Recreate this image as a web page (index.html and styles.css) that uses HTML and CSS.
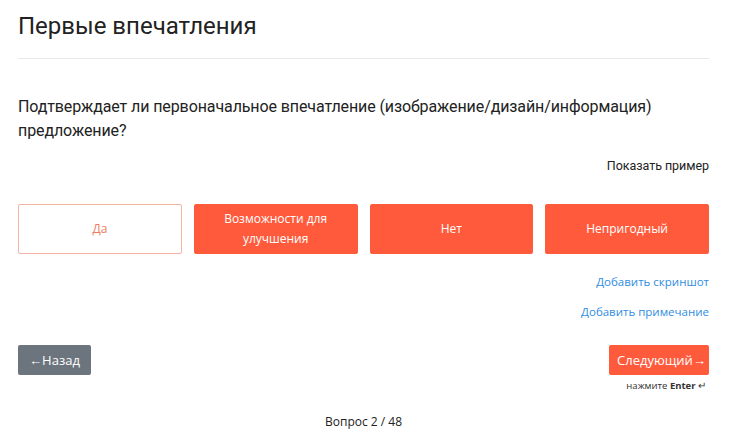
FILE: index.html
```html
<!DOCTYPE html>
<html lang="ru">
<head>
  <meta charset="UTF-8">
  <meta name="viewport" content="width=device-width, initial-scale=1.0">
  <title>Первые впечатления</title>
  <link rel="stylesheet" href="styles.css">
</head>
<body>
  <div class="container">
    <h1 class="title">Первые впечатления</h1>
    <p class="question">Подтверждает ли первоначальное впечатление (изображение/дизайн/информация) предложение?</p>
    <div class="example"><a href="#">Показать пример</a></div>

    <div class="answers">
      <button class="answer selected">Да</button>
      <button class="answer">Возможности для улучшения</button>
      <button class="answer">Нет</button>
      <button class="answer">Непригодный</button>
    </div>

    <div class="extra">
      <a href="#">Добавить скриншот</a>
      <a href="#">Добавить примечание</a>
    </div>

    <div class="nav">
      <button class="btn back">&larr;Назад</button>
      <div class="next-wrap">
        <button class="btn next">Следующий&rarr;</button>
        <div class="hint">нажмите <b>Enter</b> &#8629;</div>
      </div>
    </div>

    <div class="counter">Вопрос 2 / 48</div>
  </div>
</body>
</html>
```

FILE: styles.css
```css
body { margin: 0; background: #fff; color: #222; font-family: Roboto, "Liberation Sans", sans-serif; }
.container { padding: 0 21px 0 18px; }
.title { font-size: 24px; font-weight: 400; margin: 0; padding: 11px 0 17px; border-bottom: 1px solid #e9e9e9; line-height: 30px; }
.question { font-size: 16px; letter-spacing: -0.1px; line-height: 24px; margin: 36px 0 0; }
.example { text-align: right; margin-top: 15px; font-size: 12.5px; letter-spacing: -0.05px; }
.example a { color: #222; text-decoration: none; }

.answers { display: grid; grid-template-columns: repeat(4, 1fr); gap: 12px; margin-top: 31px; }
.answer { height: 50px; background: #ff5a3c; color: #fff; border: 1px solid #ff5a3c; border-radius: 2px; font-family: "Open Sans", sans-serif; font-size: 12px; line-height: 20px; padding: 0 24px; }
.answer.selected { background: #fff; color: #f07a62; border-color: #f5b3a5; }

.extra { display: flex; flex-direction: column; align-items: flex-end; gap: 12px; margin-top: 19px; font-family: "Open Sans", sans-serif; font-size: 11.5px; }
.extra a { color: #2f8ddf; text-decoration: none; line-height: 18px; }

.nav { display: flex; justify-content: space-between; align-items: flex-start; margin-top: 24px; }
.btn { height: 30px; border: none; border-radius: 2px; color: #fff; font-family: "Open Sans", sans-serif; font-size: 13px; padding: 0 8px; }
.back { background: #6c757d; width: 73px; }
.next-wrap { display: flex; flex-direction: column; align-items: flex-end; }
.next { background: #ff5a3c; width: 100px; }
.hint { font-family: "Open Sans", sans-serif; font-size: 9.5px; color: #333; margin-top: 4px; padding-right: 3px; }
.counter { text-align: center; font-family: "Open Sans", sans-serif; font-size: 12px; margin-top: 21px; color: #222; }
```
